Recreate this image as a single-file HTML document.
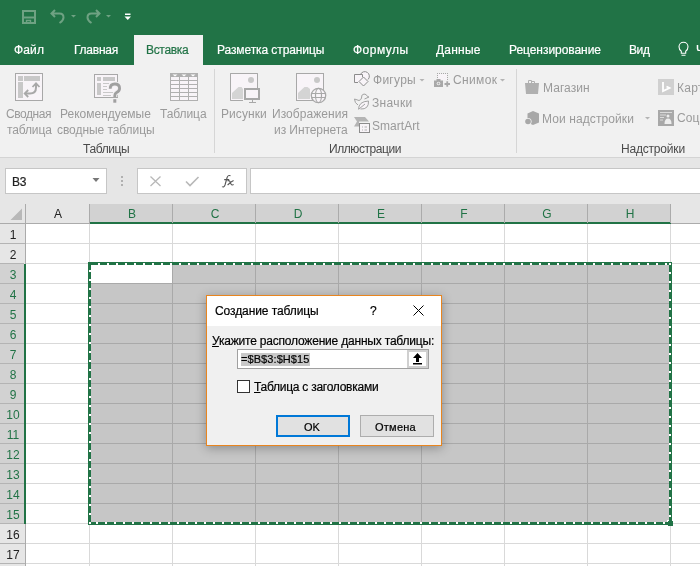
<!DOCTYPE html><html><head><meta charset="utf-8"><style>
*{margin:0;padding:0;box-sizing:border-box}
html,body{width:700px;height:566px;overflow:hidden;background:#fff;font-family:"Liberation Sans",sans-serif}
.a{position:absolute}
.t{position:absolute;white-space:nowrap;line-height:1;will-change:transform}
.s{-webkit-text-stroke:0.2px currentColor}
</style></head><body><div class="a" style="left:0;top:0;width:700px;height:65px;background:#217346"></div><div class="a" style="left:134px;top:35px;width:69px;height:30px;background:#f1f1f1"></div><div class="t s" style="left:14.4px;top:44.1px;font-size:12px;color:#fff;letter-spacing:0.125px;">Файл</div><div class="t s" style="left:73.9px;top:44.1px;font-size:12px;color:#fff;letter-spacing:-0.239px;">Главная</div><div class="t s" style="left:146.4px;top:44.1px;font-size:12px;color:#217346;letter-spacing:-0.328px;">Вставка</div><div class="t s" style="left:217.4px;top:44.1px;font-size:12px;color:#fff;letter-spacing:-0.092px;">Разметка страницы</div><div class="t s" style="left:352.8px;top:44.1px;font-size:12px;color:#fff;letter-spacing:0.469px;">Формулы</div><div class="t s" style="left:436.4px;top:44.1px;font-size:12px;color:#fff;letter-spacing:0.226px;">Данные</div><div class="t s" style="left:508.9px;top:44.1px;font-size:12px;color:#fff;letter-spacing:-0.052px;">Рецензирование</div><div class="t s" style="left:628.9px;top:44.1px;font-size:12px;color:#fff;letter-spacing:-0.401px;">Вид</div><div class="t s" style="left:695.8px;top:44.1px;font-size:12px;color:#fff;letter-spacing:0.600px;">Ч</div><svg class="a" style="left:0;top:0" width="140" height="30"><path d="M23 11H35V23H23Z" fill="none" stroke="#6fa283" stroke-width="2"/><path d="M23 17.5H35" stroke="#6fa283" stroke-width="2"/><path d="M26.5 23V20.5H30.5V23" fill="none" stroke="#6fa283" stroke-width="1.4"/><path d="M55 10L51.5 13.5L55 17M51.5 13.5H59.5Q63.5 13.5 63.5 17.5Q63.5 20.5 59.5 23" fill="none" stroke="#6fa283" stroke-width="2"/><path d="M71 15H76L73.5 17.5Z" fill="#6fa283"/><path d="M96 10L99.5 13.5L96 17M99.5 13.5H91.5Q87.5 13.5 87.5 17.5Q87.5 20.5 91.5 23" fill="none" stroke="#6fa283" stroke-width="2"/><path d="M106 15H111L108.5 17.5Z" fill="#6fa283"/><path d="M125 13.5H130.5V15H125Z" fill="#fff"/><path d="M124.5 16.5H131L127.75 20Z" fill="#fff"/></svg><svg class="a" style="left:0;top:0" width="700" height="64"><path d="M681.3 53.2V51.2Q679 49.5 679 46.7A4.5 4.5 0 0 1 688 46.7Q688 49.5 685.7 51.2V53.2ZM681.5 55.3H685.5" fill="none" stroke="#fff" stroke-width="1.1"/></svg><div class="a" style="left:0;top:65px;width:700px;height:92px;background:#f1f1f1"></div><div class="a" style="left:0;top:157px;width:700px;height:1px;background:#d4d4d4"></div><div class="t" style="left:6.4px;top:107.8px;font-size:12px;color:#9a9a9a;letter-spacing:-0.444px;">Сводная</div><div class="t" style="left:7.1px;top:124.1px;font-size:12px;color:#9a9a9a;letter-spacing:-0.132px;">таблица</div><div class="t" style="left:60.4px;top:107.8px;font-size:12px;color:#9a9a9a;">Рекомендуемые</div><div class="t" style="left:56.9px;top:124.1px;font-size:12px;color:#9a9a9a;letter-spacing:-0.065px;">сводные таблицы</div><div class="t" style="left:160.4px;top:107.8px;font-size:12px;color:#9a9a9a;letter-spacing:-0.080px;">Таблица</div><div class="t" style="left:221.0px;top:107.8px;font-size:12px;color:#9a9a9a;letter-spacing:0.074px;">Рисунки</div><div class="t" style="left:272.4px;top:107.8px;font-size:12px;color:#9a9a9a;letter-spacing:0.054px;">Изображения</div><div class="t" style="left:273.8px;top:124.1px;font-size:12px;color:#9a9a9a;letter-spacing:-0.068px;">из Интернета</div><div class="t" style="left:372.8px;top:73.8px;font-size:12px;color:#9a9a9a;letter-spacing:0.273px;">Фигуры</div><div class="t" style="left:372.4px;top:96.8px;font-size:12px;color:#9a9a9a;letter-spacing:0.336px;">Значки</div><div class="t" style="left:372.4px;top:119.8px;font-size:12px;color:#9a9a9a;letter-spacing:0.046px;">SmartArt</div><div class="t" style="left:452.9px;top:73.8px;font-size:12px;color:#9a9a9a;letter-spacing:0.355px;">Снимок</div><div class="t" style="left:542.8px;top:82.4px;font-size:12px;color:#9a9a9a;letter-spacing:0.046px;">Магазин</div><div class="t" style="left:542.4px;top:112.8px;font-size:12px;color:#9a9a9a;letter-spacing:0.097px;">Мои надстройки</div><div class="t" style="left:676.9px;top:81.6px;font-size:12px;color:#9a9a9a;letter-spacing:0.234px;">Карт</div><div class="t" style="left:676.9px;top:112.3px;font-size:12px;color:#9a9a9a;letter-spacing:0.094px;">Соц</div><div class="t" style="left:83.4px;top:142.6px;font-size:12px;color:#4a4a4a;letter-spacing:-0.388px;">Таблицы</div><div class="t" style="left:329.4px;top:142.6px;font-size:12px;color:#4a4a4a;letter-spacing:-0.432px;">Иллюстрации</div><div class="t" style="left:620.8px;top:142.6px;font-size:12px;color:#4a4a4a;letter-spacing:-0.194px;">Надстройки</div><div class="a" style="left:214px;top:69px;width:1px;height:84px;background:#d6d6d6"></div><div class="a" style="left:516px;top:69px;width:1px;height:84px;background:#d6d6d6"></div><div class="a" style="left:0;top:158px;width:700px;height:46px;background:#e6e6e6"></div><div class="a" style="left:5px;top:168px;width:102px;height:26px;background:#fff;border:1px solid #c6c6c6"></div><div class="t s" style="left:12.4px;top:175.8px;font-size:12px;color:#222;letter-spacing:-0.336px;">B3</div><div class="a" style="left:137px;top:168px;width:110px;height:26px;background:#fff;border:1px solid #c6c6c6"></div><div class="a" style="left:250px;top:168px;width:460px;height:26px;background:#fff;border:1px solid #c6c6c6"></div><svg class="a" style="left:0;top:0" width="700" height="160"><rect x="15.5" y="73.5" width="27" height="27" fill="#f8f4f8" stroke="#a8a8a8"/><rect x="18" y="76" width="5" height="5" fill="#c8c8c8"/><rect x="24" y="76" width="16" height="5" fill="#c8c8c8"/><rect x="18" y="82" width="5" height="16" fill="#c8c8c8"/><path d="M25.5 93.5H30Q36 93.5 36 87.5V84" fill="none" stroke="#a8a8a8" stroke-width="2"/><path d="M32.5 87L36 83.3L39.5 87M28.2 90L24.7 93.5L28.2 97" fill="none" stroke="#a8a8a8" stroke-width="1.8"/><rect x="94.5" y="74.5" width="23" height="23" fill="#f8f4f8" stroke="#a8a8a8"/><rect x="97" y="77" width="4" height="4" fill="#c8c8c8"/><rect x="103" y="77" width="12" height="4" fill="#c8c8c8"/><rect x="97" y="83" width="4" height="12" fill="#c8c8c8"/><path d="M103 83.5H109M103 86.5H107M103 89.5H107M103 92.5H113M103 95.5H111" stroke="#c8c8c8" stroke-width="1"/><path d="M110.2 88.8Q110.2 84 114.8 84Q119.6 84 119.6 88.3Q119.6 91 116.6 92.6Q114.8 93.6 114.8 95.6V97" fill="none" stroke="#f2f0f2" stroke-width="5"/><rect x="112" y="98" width="5.5" height="5.5" fill="#f2f0f2"/><path d="M110.2 88.8Q110.2 84 114.8 84Q119.6 84 119.6 88.3Q119.6 91 116.6 92.6Q114.8 93.6 114.8 95.6V97" fill="none" stroke="#a0a0a0" stroke-width="2.8"/><rect x="113.3" y="99.2" width="3" height="3.5" fill="#a0a0a0"/><rect x="170" y="73" width="28" height="28" fill="#b0b0b0"/><rect x="171" y="77" width="8" height="3" fill="#f8f4f8"/><rect x="171" y="81" width="8" height="3" fill="#f8f4f8"/><rect x="171" y="85" width="8" height="3" fill="#f8f4f8"/><rect x="171" y="89" width="8" height="3" fill="#f8f4f8"/><rect x="171" y="93" width="8" height="3" fill="#f8f4f8"/><rect x="171" y="97" width="8" height="3" fill="#f8f4f8"/><path d="M172.5 74.5H177.5L175 76.5Z" fill="#fff"/><rect x="180" y="77" width="8" height="3" fill="#f8f4f8"/><rect x="180" y="81" width="8" height="3" fill="#f8f4f8"/><rect x="180" y="85" width="8" height="3" fill="#f8f4f8"/><rect x="180" y="89" width="8" height="3" fill="#f8f4f8"/><rect x="180" y="93" width="8" height="3" fill="#f8f4f8"/><rect x="180" y="97" width="8" height="3" fill="#f8f4f8"/><path d="M181.5 74.5H186.5L184 76.5Z" fill="#fff"/><rect x="189" y="77" width="8" height="3" fill="#f8f4f8"/><rect x="189" y="81" width="8" height="3" fill="#f8f4f8"/><rect x="189" y="85" width="8" height="3" fill="#f8f4f8"/><rect x="189" y="89" width="8" height="3" fill="#f8f4f8"/><rect x="189" y="93" width="8" height="3" fill="#f8f4f8"/><rect x="189" y="97" width="8" height="3" fill="#f8f4f8"/><path d="M190.5 74.5H195.5L193 76.5Z" fill="#fff"/><path d="M230.5 100.5V73.5H257.5V88" fill="#f8f4f8" stroke="#a8a8a8"/><rect x="231" y="74" width="26" height="26" fill="#f8f4f8"/><path d="M230.5 73.5V100.5H243" fill="none" stroke="#a8a8a8"/><path d="M230.5 73.5H257.5V87" fill="none" stroke="#a8a8a8"/><circle cx="251" cy="80" r="3" fill="#c8c8c8"/><path d="M232 99V93L238.5 87H241.5L243 89V99Z" fill="#d4d4d4"/><rect x="245" y="89" width="14" height="10" fill="#f8f4f8" stroke="#a8a8a8" stroke-width="2"/><path d="M249 102.5H256" stroke="#a8a8a8" stroke-width="1"/><path d="M252.5 100V102" stroke="#a8a8a8"/><rect x="296.5" y="73.5" width="27" height="27" fill="#f8f4f8" stroke="#a8a8a8"/><circle cx="317" cy="80" r="3" fill="#c8c8c8"/><path d="M298 99V93L304.5 87H307.5L310 89V99Z" fill="#d4d4d4"/><circle cx="318.5" cy="95.5" r="7.2" fill="#f8f4f8" stroke="#a8a8a8" stroke-width="1.3"/><ellipse cx="318.5" cy="95.5" rx="3" ry="7.2" fill="none" stroke="#a8a8a8" stroke-width="1.2"/><path d="M311.5 93.5H325.5M311.5 97.5H325.5" stroke="#a8a8a8" stroke-width="1.2"/><path d="M360.5 74.5A4.6 4.6 0 1 1 368 79.5" fill="#f8f4f8" stroke="#8c8c8c"/><path d="M358 82.5H354.5V74.5H362.5V77" fill="#f8f4f8" stroke="#8c8c8c"/><path d="M363.5 77L368 81.5L363.5 86L359 81.5Z" fill="#f8f4f8" stroke="#8c8c8c"/><path d="M358 105Q354.5 103 354.5 99L359 100.5Q361 100 361.5 98Q361 94.5 364 94Q366.5 94 367.5 96.5L369 97L364.5 99" fill="none" stroke="#a2a2a2"/><path d="M358.5 109.5Q358.5 101.5 368.5 101Q369 109.5 360.5 109M359 109L365 104" fill="#f8f4f8" stroke="#a2a2a2"/><path d="M354 117H365L369 121.5H359V126.5H354L357 121.5Z" fill="#b4b4b4"/><rect x="359.5" y="123.5" width="10" height="9" fill="#f8f4f8" stroke="#8c8c8c"/><path d="M362 127H363M364.5 127H367M362 130H363M364.5 130H367" stroke="#b0b0b0"/><rect x="438" y="74" width="9" height="6" fill="#f8f4f8"/><rect x="437" y="73" width="1" height="1" fill="#a8a8a8"/><rect x="439" y="73" width="1" height="1" fill="#a8a8a8"/><rect x="441" y="73" width="1" height="1" fill="#a8a8a8"/><rect x="443" y="73" width="1" height="1" fill="#a8a8a8"/><rect x="445" y="73" width="1" height="1" fill="#a8a8a8"/><rect x="447" y="73" width="1" height="1" fill="#a8a8a8"/><rect x="447" y="75" width="1" height="1" fill="#a8a8a8"/><rect x="447" y="77" width="1" height="1" fill="#a8a8a8"/><rect x="447" y="79" width="1" height="1" fill="#a8a8a8"/><rect x="437" y="75" width="1" height="1" fill="#a8a8a8"/><rect x="437" y="77" width="1" height="1" fill="#a8a8a8"/><path d="M434 80.5H443V87H434Z" fill="#a8a8a8"/><rect x="436.5" y="79" width="4" height="2" fill="#a8a8a8"/><circle cx="438.5" cy="83.5" r="1.8" fill="#f1f1f1"/><circle cx="438.5" cy="83.5" r="1" fill="#a8a8a8"/><path d="M444.5 84H450M447.25 81.2V86.8" stroke="#a8a8a8" stroke-width="1.8"/><path d="M419.5 79H424.5L422.0 81.5Z" fill="#b4b4b4"/><path d="M500 79H505L502.5 81.5Z" fill="#b4b4b4"/><path d="M645 117H650L647.5 119.5Z" fill="#b4b4b4"/><path d="M525 83H539L538 94H526Z" fill="#b0b0b0"/><path d="M528.5 83V80.5H531.5V83M531.5 81.5H534.5V83" fill="none" stroke="#b0b0b0"/><path d="M533 111L539 113.5V122.5L533 125L527.5 122.5V113.5Z" fill="#a8a8a8"/><circle cx="528" cy="121.5" r="3.6" fill="#f1f1f1"/><circle cx="528" cy="121.5" r="2.8" fill="#a8a8a8"/><rect x="658" y="79" width="16" height="16" fill="#d0d0d0"/><path d="M663 82V91L669.5 88L666.5 86.5" fill="none" stroke="#fff" stroke-width="1.8"/><rect x="658" y="110" width="16" height="16" fill="#a8a8a8"/><path d="M660 112.5H672M660 115H666M660 117.5H664M660 120H663" stroke="#e8e8e8" stroke-width="0.8"/><circle cx="668" cy="116" r="1.5" fill="#eee"/><path d="M664.5 124Q664.5 118.5 668 118.5Q671.5 118.5 671.5 124Z" fill="#eee"/></svg><svg class="a" style="left:0;top:158px" width="260" height="46"><path d="M92.5 20H99.5L96 24Z" fill="#777"/><rect x="121" y="18" width="2" height="2" fill="#b0b0b0"/><rect x="121" y="22" width="2" height="2" fill="#b0b0b0"/><rect x="121" y="26" width="2" height="2" fill="#b0b0b0"/><path d="M150.5 18.5L160.5 28M160.5 18.5L150.5 28" stroke="#b8b8b8" stroke-width="1.3"/><path d="M186 23.5L190 27.5L198.5 19" fill="none" stroke="#b8b8b8" stroke-width="1.6"/></svg><svg class="a" style="left:0;top:0" width="240" height="200"><path d="M230.5 175.8Q228.3 174.6 227.1 177.5L225 185Q224 187.8 222 186.6M224.2 179.6H229.2M227.6 181Q229.4 180 230.2 182.2L231 184Q231.8 185.6 233.6 184.6M233.6 180.6Q231.5 181.5 227.6 185" fill="none" stroke="#555" stroke-width="1.1"/></svg><div class="a" style="left:0;top:204px;width:700px;height:20px;background:#e6e6e6"></div><div class="a" style="left:0;top:224px;width:25px;height:342px;background:#e6e6e6"></div><div class="a" style="left:90px;top:204px;width:581px;height:18px;background:#d2d2d2"></div><div class="a" style="left:90px;top:222px;width:581px;height:2px;background:#217346"></div><div class="a" style="left:0;top:264px;width:24px;height:260px;background:#d2d2d2"></div><div class="a" style="left:24px;top:264px;width:2px;height:260px;background:#217346"></div><svg class="a" style="left:0;top:204px" width="25" height="20"><path d="M22 4.5V16H10.5Z" fill="#b8b8b8"/></svg><div class="a" style="left:0;top:223px;width:90px;height:1px;background:#ababab"></div><div class="a" style="left:671px;top:223px;width:29px;height:1px;background:#ababab"></div><div class="a" style="left:25px;top:204px;width:1px;height:60px;background:#ababab"></div><div class="a" style="left:25px;top:524px;width:1px;height:42px;background:#ababab"></div><div class="a" style="left:89px;top:204px;width:1px;height:19px;background:#ababab"></div><div class="a" style="left:172px;top:204px;width:1px;height:19px;background:#ababab"></div><div class="a" style="left:255px;top:204px;width:1px;height:19px;background:#ababab"></div><div class="a" style="left:338px;top:204px;width:1px;height:19px;background:#ababab"></div><div class="a" style="left:421px;top:204px;width:1px;height:19px;background:#ababab"></div><div class="a" style="left:504px;top:204px;width:1px;height:19px;background:#ababab"></div><div class="a" style="left:587px;top:204px;width:1px;height:19px;background:#ababab"></div><div class="a" style="left:670px;top:204px;width:1px;height:19px;background:#ababab"></div><div class="a" style="left:0;top:243px;width:25px;height:1px;background:#b4b4b4"></div><div class="a" style="left:0;top:263px;width:24px;height:1px;background:#b4b4b4"></div><div class="a" style="left:0;top:283px;width:24px;height:1px;background:#b4b4b4"></div><div class="a" style="left:0;top:303px;width:24px;height:1px;background:#b4b4b4"></div><div class="a" style="left:0;top:323px;width:24px;height:1px;background:#b4b4b4"></div><div class="a" style="left:0;top:343px;width:24px;height:1px;background:#b4b4b4"></div><div class="a" style="left:0;top:363px;width:24px;height:1px;background:#b4b4b4"></div><div class="a" style="left:0;top:383px;width:24px;height:1px;background:#b4b4b4"></div><div class="a" style="left:0;top:403px;width:24px;height:1px;background:#b4b4b4"></div><div class="a" style="left:0;top:423px;width:24px;height:1px;background:#b4b4b4"></div><div class="a" style="left:0;top:443px;width:24px;height:1px;background:#b4b4b4"></div><div class="a" style="left:0;top:463px;width:24px;height:1px;background:#b4b4b4"></div><div class="a" style="left:0;top:483px;width:24px;height:1px;background:#b4b4b4"></div><div class="a" style="left:0;top:503px;width:24px;height:1px;background:#b4b4b4"></div><div class="a" style="left:0;top:523px;width:24px;height:1px;background:#b4b4b4"></div><div class="a" style="left:0;top:543px;width:25px;height:1px;background:#b4b4b4"></div><div class="a" style="left:0;top:563px;width:25px;height:1px;background:#b4b4b4"></div><div class="a" style="left:89px;top:224px;width:1px;height:342px;background:#d9d9d9"></div><div class="a" style="left:172px;top:224px;width:1px;height:342px;background:#d9d9d9"></div><div class="a" style="left:255px;top:224px;width:1px;height:342px;background:#d9d9d9"></div><div class="a" style="left:338px;top:224px;width:1px;height:342px;background:#d9d9d9"></div><div class="a" style="left:421px;top:224px;width:1px;height:342px;background:#d9d9d9"></div><div class="a" style="left:504px;top:224px;width:1px;height:342px;background:#d9d9d9"></div><div class="a" style="left:587px;top:224px;width:1px;height:342px;background:#d9d9d9"></div><div class="a" style="left:670px;top:224px;width:1px;height:342px;background:#d9d9d9"></div><div class="a" style="left:26px;top:243px;width:674px;height:1px;background:#d9d9d9"></div><div class="a" style="left:26px;top:263px;width:674px;height:1px;background:#d9d9d9"></div><div class="a" style="left:26px;top:283px;width:674px;height:1px;background:#d9d9d9"></div><div class="a" style="left:26px;top:303px;width:674px;height:1px;background:#d9d9d9"></div><div class="a" style="left:26px;top:323px;width:674px;height:1px;background:#d9d9d9"></div><div class="a" style="left:26px;top:343px;width:674px;height:1px;background:#d9d9d9"></div><div class="a" style="left:26px;top:363px;width:674px;height:1px;background:#d9d9d9"></div><div class="a" style="left:26px;top:383px;width:674px;height:1px;background:#d9d9d9"></div><div class="a" style="left:26px;top:403px;width:674px;height:1px;background:#d9d9d9"></div><div class="a" style="left:26px;top:423px;width:674px;height:1px;background:#d9d9d9"></div><div class="a" style="left:26px;top:443px;width:674px;height:1px;background:#d9d9d9"></div><div class="a" style="left:26px;top:463px;width:674px;height:1px;background:#d9d9d9"></div><div class="a" style="left:26px;top:483px;width:674px;height:1px;background:#d9d9d9"></div><div class="a" style="left:26px;top:503px;width:674px;height:1px;background:#d9d9d9"></div><div class="a" style="left:26px;top:523px;width:674px;height:1px;background:#d9d9d9"></div><div class="a" style="left:26px;top:543px;width:674px;height:1px;background:#d9d9d9"></div><div class="a" style="left:26px;top:563px;width:674px;height:1px;background:#d9d9d9"></div><div class="a" style="left:90px;top:264px;width:581px;height:260px;background:#c6c6c6"></div><div class="a" style="left:90px;top:264px;width:82px;height:19px;background:#fff"></div><div class="a" style="left:172px;top:264px;width:1px;height:260px;background:#a9a9a9"></div><div class="a" style="left:255px;top:264px;width:1px;height:260px;background:#a9a9a9"></div><div class="a" style="left:338px;top:264px;width:1px;height:260px;background:#a9a9a9"></div><div class="a" style="left:421px;top:264px;width:1px;height:260px;background:#a9a9a9"></div><div class="a" style="left:504px;top:264px;width:1px;height:260px;background:#a9a9a9"></div><div class="a" style="left:587px;top:264px;width:1px;height:260px;background:#a9a9a9"></div><div class="a" style="left:90px;top:283px;width:581px;height:1px;background:#a9a9a9"></div><div class="a" style="left:90px;top:303px;width:581px;height:1px;background:#a9a9a9"></div><div class="a" style="left:90px;top:323px;width:581px;height:1px;background:#a9a9a9"></div><div class="a" style="left:90px;top:343px;width:581px;height:1px;background:#a9a9a9"></div><div class="a" style="left:90px;top:363px;width:581px;height:1px;background:#a9a9a9"></div><div class="a" style="left:90px;top:383px;width:581px;height:1px;background:#a9a9a9"></div><div class="a" style="left:90px;top:403px;width:581px;height:1px;background:#a9a9a9"></div><div class="a" style="left:90px;top:423px;width:581px;height:1px;background:#a9a9a9"></div><div class="a" style="left:90px;top:443px;width:581px;height:1px;background:#a9a9a9"></div><div class="a" style="left:90px;top:463px;width:581px;height:1px;background:#a9a9a9"></div><div class="a" style="left:90px;top:483px;width:581px;height:1px;background:#a9a9a9"></div><div class="a" style="left:90px;top:503px;width:581px;height:1px;background:#a9a9a9"></div><div class="t" style="left:18.0px;width:80px;text-align:center;top:207.5px;font-size:12px;color:#222">A</div><div class="t" style="left:91.5px;width:80px;text-align:center;top:207.5px;font-size:12px;color:#217346">B</div><div class="t" style="left:174.5px;width:80px;text-align:center;top:207.5px;font-size:12px;color:#217346">C</div><div class="t" style="left:257.5px;width:80px;text-align:center;top:207.5px;font-size:12px;color:#217346">D</div><div class="t" style="left:340.5px;width:80px;text-align:center;top:207.5px;font-size:12px;color:#217346">E</div><div class="t" style="left:423.5px;width:80px;text-align:center;top:207.5px;font-size:12px;color:#217346">F</div><div class="t" style="left:506.5px;width:80px;text-align:center;top:207.5px;font-size:12px;color:#217346">G</div><div class="t" style="left:589.5px;width:80px;text-align:center;top:207.5px;font-size:12px;color:#217346">H</div><div class="t" style="left:1px;width:24px;text-align:center;top:229.3px;font-size:12px;color:#222">1</div><div class="t" style="left:1px;width:24px;text-align:center;top:249.3px;font-size:12px;color:#222">2</div><div class="t" style="left:1px;width:24px;text-align:center;top:269.3px;font-size:12px;color:#217346">3</div><div class="t" style="left:1px;width:24px;text-align:center;top:289.3px;font-size:12px;color:#217346">4</div><div class="t" style="left:1px;width:24px;text-align:center;top:309.3px;font-size:12px;color:#217346">5</div><div class="t" style="left:1px;width:24px;text-align:center;top:329.3px;font-size:12px;color:#217346">6</div><div class="t" style="left:1px;width:24px;text-align:center;top:349.3px;font-size:12px;color:#217346">7</div><div class="t" style="left:1px;width:24px;text-align:center;top:369.3px;font-size:12px;color:#217346">8</div><div class="t" style="left:1px;width:24px;text-align:center;top:389.3px;font-size:12px;color:#217346">9</div><div class="t" style="left:1px;width:24px;text-align:center;top:409.3px;font-size:12px;color:#217346">10</div><div class="t" style="left:1px;width:24px;text-align:center;top:429.3px;font-size:12px;color:#217346">11</div><div class="t" style="left:1px;width:24px;text-align:center;top:449.3px;font-size:12px;color:#217346">12</div><div class="t" style="left:1px;width:24px;text-align:center;top:469.3px;font-size:12px;color:#217346">13</div><div class="t" style="left:1px;width:24px;text-align:center;top:489.3px;font-size:12px;color:#217346">14</div><div class="t" style="left:1px;width:24px;text-align:center;top:509.3px;font-size:12px;color:#217346">15</div><div class="t" style="left:1px;width:24px;text-align:center;top:529.3px;font-size:12px;color:#222">16</div><div class="t" style="left:1px;width:24px;text-align:center;top:549.3px;font-size:12px;color:#222">17</div><div class="a" style="left:88px;top:262px;width:584px;height:263px;border:1px solid #217346"></div><div class="a" style="left:89px;top:263px;width:582px;height:2px;background:#217346"></div><div class="a" style="left:89px;top:522px;width:582px;height:2px;background:#217346"></div><div class="a" style="left:89px;top:263px;width:2px;height:261px;background:#217346"></div><div class="a" style="left:669px;top:263px;width:2px;height:261px;background:#217346"></div><div class="a" style="left:91px;top:263px;width:578px;height:2px;background:repeating-linear-gradient(to right,#217346 0,#217346 7px,#fff 7px,#fff 9px,#217346 9px,#217346 9px)"></div><div class="a" style="left:669px;top:263px;width:2px;height:257px;background:repeating-linear-gradient(to bottom,#217346 0,#217346 0px,#fff 0px,#fff 2px,#217346 2px,#217346 9px)"></div><div class="a" style="left:89px;top:265px;width:2px;height:259px;background:repeating-linear-gradient(to bottom,#217346 0,#217346 5px,#fff 5px,#fff 7px,#217346 7px,#217346 9px)"></div><div class="a" style="left:91px;top:522px;width:576px;height:2px;background:repeating-linear-gradient(to right,#217346 0,#217346 5px,#fff 5px,#fff 7px,#217346 7px,#217346 9px)"></div><div class="a" style="left:667px;top:520px;width:2px;height:2px;background:#fff"></div><div class="a" style="left:668px;top:521px;width:5px;height:5px;background:#217346"></div><div class="a" style="left:206px;top:295px;width:236px;height:151px;box-shadow:0 2px 10px rgba(0,0,0,.3)"></div><div class="a" style="left:206px;top:295px;width:236px;height:151px;background:#f0f0f0;border:1px solid #e8851f"></div><div class="a" style="left:207px;top:296px;width:234px;height:30px;background:#fff"></div><div class="t s" style="left:214.8px;top:304.7px;font-size:12px;color:#000;letter-spacing:-0.088px;">Создание таблицы</div><div class="t s" style="left:369.7px;top:304.7px;font-size:12px;color:#000;letter-spacing:0.028px;">?</div><svg class="a" style="left:413px;top:305px" width="11" height="11"><path d="M0.5 0.5L10.5 10.5M10.5 0.5L0.5 10.5" stroke="#000" stroke-width="1"/></svg><div class="t s" style="left:212.4px;top:334.6px;font-size:12px;color:#000;letter-spacing:-0.197px;"><u>У</u>кажите расположение данных таблицы:</div><div class="a" style="left:237px;top:349px;width:192px;height:20px;background:#fff;border:1px solid #a0a0a0"></div><div class="a" style="left:241px;top:353px;width:69px;height:13px;background:#c8c8c8"></div><div class="t s" style="left:240.9px;top:353.5px;font-size:11px;color:#000;letter-spacing:0.078px;">=$B$3:$H$15</div><div class="a" style="left:407px;top:350px;width:21px;height:18px;background:#fff;border:2px solid #d0d0d0"></div><svg class="a" style="left:413px;top:353px" width="9" height="12"><path d="M4.5 0L9 5H6V9H3V5H0Z" fill="#000"/><rect x="0" y="10" width="9" height="1.5" fill="#000"/></svg><div class="a" style="left:237px;top:380px;width:13px;height:13px;background:#fff;border:1px solid #333"></div><div class="t s" style="left:253.6px;top:381.3px;font-size:12px;color:#000;letter-spacing:-0.259px;"><u>Т</u>аблица с заголовками</div><div class="a" style="left:276px;top:415px;width:74px;height:22px;background:#e1e1e1;border:2px solid #0078d7"></div><div class="t s" style="left:304.4px;top:421.5px;font-size:11px;color:#000;letter-spacing:0.047px;">OK</div><div class="a" style="left:360px;top:415px;width:74px;height:22px;background:#e1e1e1;border:1px solid #adadad"></div><div class="t s" style="left:375.4px;top:421.5px;font-size:11px;color:#000;letter-spacing:0.253px;">Отмена</div></body></html>
